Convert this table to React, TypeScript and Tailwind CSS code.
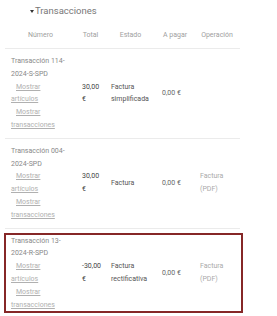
import React from 'react'

interface Tx {
  id: string
  total: string
  estado: string
  pdf: boolean
  selected?: boolean
}

const rows: Tx[] = [
  { id: '114-|2024-S-SPD', total: '30,00 €', estado: 'Factura simplificada', pdf: false },
  { id: '004-|2024-SPD', total: '30,00 €', estado: 'Factura', pdf: true },
  { id: '13-|2024-R-SPD', total: '-30,00 €', estado: 'Factura rectificativa', pdf: true, selected: true },
]

const cols = 'grid grid-cols-[71px_29px_51px_38px_46px]'

function Cells({ tx }: { tx: Tx }) {
  const [a, b] = tx.id.split('|')
  return (
    <>
      <div className="pl-[6px] text-[#888]">
        <div className="whitespace-nowrap">
          Transacción {a}
          <br />
          {b}
        </div>
        <div className="w-[50px]">
          <a className="ml-[5px] text-[#b0b0b0] underline cursor-pointer">Mostrar artículos</a>
        </div>
        <div className="w-[50px]">
          <a className="ml-[5px] text-[#b0b0b0] underline cursor-pointer">Mostrar transacciones</a>
        </div>
      </div>
      <div className="pl-[6px] self-center text-[#444]">
        <div className="w-[18px]">{tx.total}</div>
      </div>
      <div className="pl-[6px] pr-[4px] self-center text-[#555]">{tx.estado}</div>
      <div className="pl-[6px] self-center text-[#666]">0,00 €</div>
      <div className="pl-[6px] pr-[6px] self-center text-[#aaa]">{tx.pdf ? 'Factura (PDF)' : ''}</div>
    </>
  )
}

export default function App() {
  return (
    <div className="w-[277px] h-[316px] bg-white overflow-hidden font-['Roboto',sans-serif]">
      <div className="h-[22px] pl-[30px] flex items-center text-[9.5px] text-[#777]">
        <span className="mr-[1px] w-0 h-0 border-l-[2.5px] border-r-[2.5px] border-t-[3px] border-l-transparent border-r-transparent border-t-[#333]" />
        Transacciones
      </div>
      <div className="ml-[5px] w-[235px] text-[7px] leading-[12.8px]">
        <div className={`${cols} h-[27px] items-center text-center text-[#a0a0a0] border-b border-[#ebebeb]`}>
          <div>Número</div>
          <div>Total</div>
          <div>Estado</div>
          <div>A pagar</div>
          <div>Operación</div>
        </div>
        {rows.map((tx) =>
          tx.selected ? (
            <div key={tx.id} className="mt-[4px] -ml-[1px] w-[239px] border-2 border-[#862727]">
              <div className="grid grid-cols-[70px_29px_51px_38px_46px] [&>div:first-child]:pl-[5px]">
                <Cells tx={tx} />
              </div>
            </div>
          ) : (
            <div key={tx.id} className={`${cols} py-[6px] border-b border-[#ebebeb]`}>
              <Cells tx={tx} />
            </div>
          )
        )}
      </div>
    </div>
  )
}
